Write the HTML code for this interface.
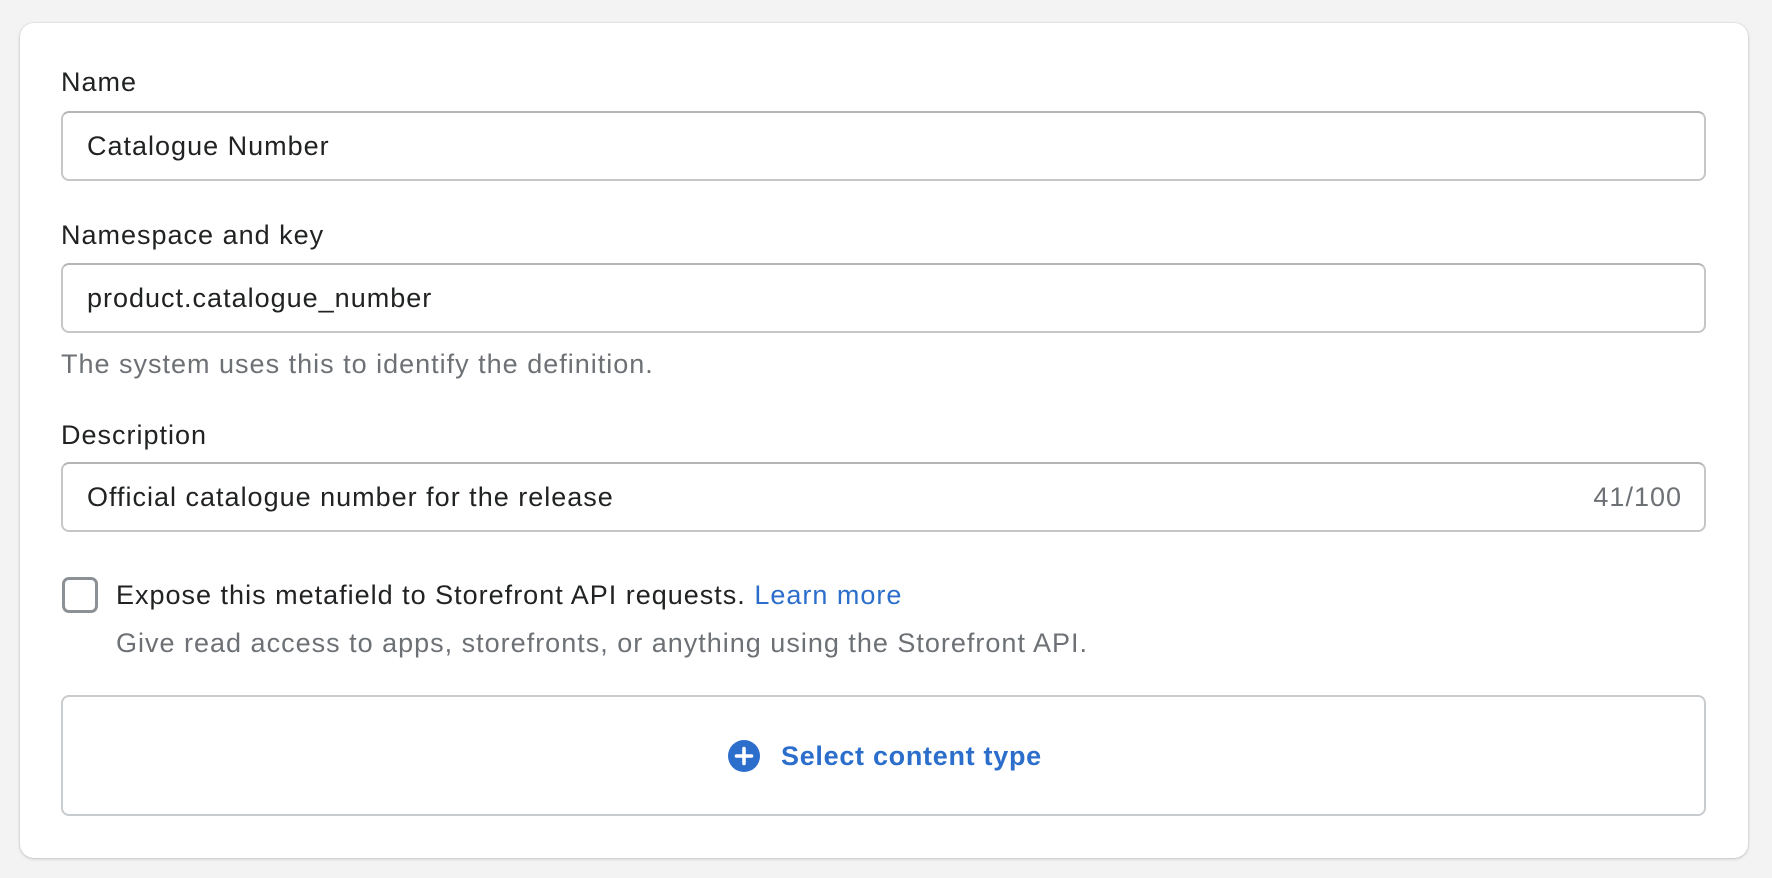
<!DOCTYPE html>
<html><head><meta charset="utf-8"><style>
html,body{margin:0;padding:0;width:1772px;height:878px;background:#f3f3f4;overflow:hidden;font-family:"Liberation Sans",Arial,sans-serif;color:#202223}
.card{position:absolute;left:20px;top:23px;width:1728px;height:835px;background:#fff;border-radius:14px;box-shadow:0 1px 3px rgba(0,0,0,.18),0 0 0 1px rgba(0,0,0,.03)}
.lbl{position:absolute;left:61px;font-size:27px;line-height:30px;letter-spacing:1px}
.inp{position:absolute;left:61px;width:1641px;height:66px;border:2px solid #c4c6c8;border-top-color:#b3b5b7;border-radius:8px;box-sizing:content-box}
.inp span{position:absolute;left:24px;top:0;line-height:66px;font-size:27px;letter-spacing:1px}
.help{position:absolute;font-size:27px;line-height:30px;color:#6d7175;letter-spacing:1px}
.cb{position:absolute;left:62px;top:577px;width:30px;height:30px;border:3px solid #8c9196;border-radius:7px}
.box{position:absolute;left:61px;top:695px;width:1641px;height:117px;border:2px solid #c9cccf;border-radius:8px}
</style></head><body>
<div class="card"></div>
<div class="lbl" style="top:67px">Name</div>
<div class="inp" style="top:111px"><span>Catalogue Number</span></div>
<div class="lbl" style="top:220px">Namespace and key</div>
<div class="inp" style="top:263px"><span>product.catalogue_number</span></div>
<div class="help" style="left:61px;top:349px">The system uses this to identify the definition.</div>
<div class="lbl" style="top:420px">Description</div>
<div class="inp" style="top:462px"><span>Official catalogue number for the release</span><span style="left:auto;right:22px;color:#6d7175">41/100</span></div>
<div class="cb"></div>
<div class="lbl" style="left:116px;top:580px">Expose this metafield to Storefront API requests. <span style="color:#2c6ecb">Learn more</span></div>
<div class="help" style="left:116px;top:628px">Give read access to apps, storefronts, or anything using the Storefront API.</div>
<div class="box"></div>
<svg style="position:absolute;left:728px;top:740px" width="32" height="32" viewBox="0 0 32 32"><circle cx="16" cy="16" r="16" fill="#2c6ecb"/><path d="M16 8.5v15M8.5 16h15" stroke="#fff" stroke-width="3.6" stroke-linecap="round"/></svg>
<div style="position:absolute;left:781px;top:741px;font-size:27px;line-height:30px;font-weight:bold;color:#2c6ecb;letter-spacing:0.7px">Select content type</div>
</body></html>
